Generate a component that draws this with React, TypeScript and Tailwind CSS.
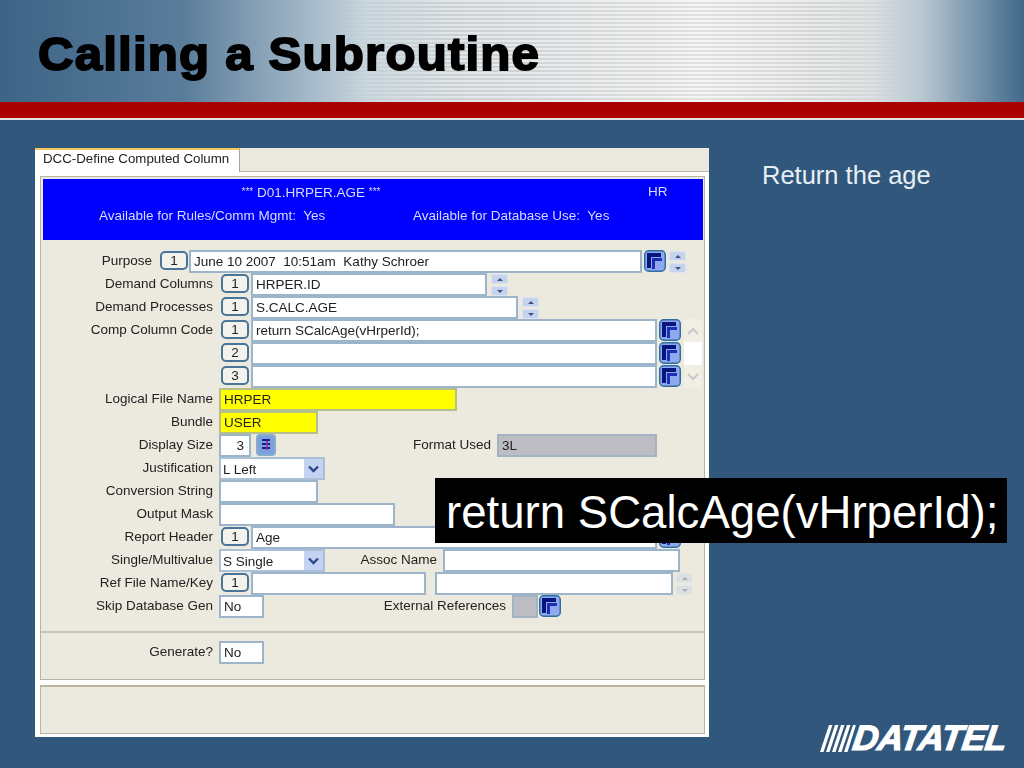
const fontForm = "font-['Liberation_Sans',sans-serif]";

function CopyIcon() {
  return (
    <svg width="22" height="22" viewBox="0 0 22 22" className="shrink-0">
      <rect x="0.75" y="0.75" width="20.500" height="20.500" rx="4" fill="#8fa9ee" stroke="#2f6ea0" strokeWidth="1.5" />
      <path d="M3 3h14v4H7v11H3z" fill="#08157f" />
      <path d="M8 8h10v3h-7v8H8z" fill="#1a2fb5" />
    </svg>
  );
}

function Spinner({ faded = false }: { faded?: boolean }) {
  return (
    <div className={`flex flex-col gap-[2px] shrink-0 w-[17px] pt-[1px] ${faded ? "opacity-40" : ""}`}>
      {[0, 1].map((i) => (
        <div key={i} className="h-[10px] bg-[#c5d4ee] border border-[#dbe3f1] rounded-[2px] flex items-center justify-center">
          <svg width="6" height="3" viewBox="0 0 6 3">
            <path d={i === 0 ? "M3 0L6 3H0z" : "M0 0h6L3 3z"} fill="#44527a" />
          </svg>
        </div>
      ))}
    </div>
  );
}

function NumButton({ n }: { n: number }) {
  return (
    <div className="w-[28px] h-[19px] mt-[1px] shrink-0 bg-[#f3f2ec] border-2 border-[#4a7498] rounded-[5px] flex items-center justify-center text-[13.5px] leading-none text-[#222]">
      {n}
    </div>
  );
}

function Field({ w, value, bg = "bg-white", border = "border-[#9db5ca]", right = false }: { w: string; value?: string; bg?: string; border?: string; right?: boolean }) {
  return (
    <div className={`${w} h-[23px] shrink-0 ${bg} border-2 ${border} px-[3px] text-[13.5px] leading-[19px] text-[#222] whitespace-pre overflow-hidden ${right ? "text-right pr-[5px]" : ""}`}>
      {value}
    </div>
  );
}

function Select({ value }: { value: string }) {
  return (
    <div className="w-[106px] h-[23px] shrink-0 bg-white border-2 border-[#a9c0d6] flex items-center justify-between text-[13.5px] text-[#222] pl-[2px]">
      <span className="leading-none mt-[3px]">{value}</span>
      <div className="w-[19px] h-[19px] bg-[#c5d3f3] flex items-center justify-center">
        <svg width="11" height="8" viewBox="0 0 11 8">
          <path d="M1 1.500l4.500 4.500L10 1.500" fill="none" stroke="#2a4a8a" strokeWidth="2.400" />
        </svg>
      </div>
    </div>
  );
}

function Label({ children }: { children: string }) {
  return <div className="w-[172px] shrink-0 text-right text-[13.5px] text-[#222] leading-[22px] whitespace-nowrap mr-[6px]">{children}</div>;
}

function Row({ label, children }: { label?: string; children?: React.ReactNode }) {
  return (
    <div className="h-[23px] flex items-start">
      <Label>{label ?? ""}</Label>
      {children}
    </div>
  );
}

function InlineLabel({ w, children }: { w: string; children: string }) {
  return <div className={`${w} shrink-0 text-right text-[13.5px] text-[#222] leading-[22px] whitespace-nowrap mr-[6px]`}>{children}</div>;
}

function App() {
  return (
    <div className="relative w-[1024px] h-[768px] overflow-hidden bg-[#31587c] font-['Liberation_Sans',sans-serif]">
      {/* top banner */}
      <div className="relative h-[102px] bg-[linear-gradient(90deg,#3d6486_0%,#5a7d9b_18%,#a3b8c8_30%,#c9d6dd_36%,#d9dfe2_45%,#eeeeee_65%,#f4f4f4_68%,#dcdfe0_85%,#b9c8d2_90%,#6f8ea8_96%,#42688a_100%)]">
        <div className="absolute inset-0 bg-[repeating-linear-gradient(180deg,rgba(255,255,255,0.25)_0px,rgba(255,255,255,0.25)_2px,rgba(150,150,150,0.2)_2px,rgba(150,150,150,0.2)_4px)] [mask-image:linear-gradient(90deg,transparent_33%,black_45%,black_80%,transparent_88%)]" />
        <h1 className="absolute left-[38px] top-[29px] origin-left scale-x-[1.07] text-[46px] leading-[50px] font-bold text-black [-webkit-text-stroke:1.8px_black] whitespace-nowrap tracking-[1.1px]">
          Calling a Subroutine
        </h1>
      </div>
      <div className="h-[16px] bg-[#a90000]" />
      <div className="h-[2px] bg-[#e4e4e4]" />

      {/* content */}
      <div className="flex pl-[35px] pt-[28px]">
        <div className={`w-[674px] h-[589px] bg-[#ece9de] blur-[0.3px] ${fontForm}`}>
          <div className="h-[24px] flex">
            <div className="w-[205px] bg-white border-t-2 border-t-[#f5c860] border-r border-r-[#a8a596] text-[13.3px] leading-[18px] text-[#222] pl-[8px] whitespace-nowrap">
              DCC-Define Computed Column
            </div>
            <div className="flex-1 border-b border-[#b8b5a4]" />
          </div>
          <div className="bg-white pl-[5px] pt-[4px] pb-[3px] h-[565px]">
            <div className="w-[665px] h-[504px] bg-[#ece9de] border border-[#b8b5a4]">
              <div className="ml-[2px] mt-[2px] w-[660px] h-[61px] bg-[#0000ff] text-[#d6dcf5] text-[13.5px] leading-[19px]">
                <div className="flex pt-[3px]">
                  <div className="w-[536px] text-center whitespace-nowrap">
                    <span className="text-[10px] align-[2px]">***</span> D01.HRPER.AGE <span className="text-[10px] align-[2px]">***</span>
                  </div>
                  <div className="ml-[69px]">HR</div>
                </div>
                <div className="flex pt-[4px]">
                  <div className="ml-[56px] w-[314px] whitespace-nowrap">Available for Rules/Comm Mgmt:&nbsp; Yes</div>
                  <div className="whitespace-nowrap">Available for Database Use:&nbsp; Yes</div>
                </div>
              </div>

              <div className="pt-[10px]">
                <Row>
                  <div className="-ml-[178px] flex items-start">
                    <div className="w-[111px] text-right text-[13.5px] text-[#222] leading-[22px] mr-[8px]">Purpose</div>
                    <NumButton n={1} />
                    <div className="w-[1px]" />
                    <Field w="w-[453px]" value="June 10 2007  10:51am  Kathy Schroer" />
                    <div className="w-[2px]" />
                    <CopyIcon />
                    <div className="w-[3px]" />
                    <Spinner />
                  </div>
                </Row>
                <Row label="Demand Columns">
                  <div className="w-[2px]" />
                  <NumButton n={1} />
                  <div className="w-[2px]" />
                  <Field w="w-[236px]" value="HRPER.ID" />
                  <div className="w-[4px]" />
                  <Spinner />
                </Row>
                <Row label="Demand Processes">
                  <div className="w-[2px]" />
                  <NumButton n={1} />
                  <div className="w-[2px]" />
                  <Field w="w-[267px]" value="S.CALC.AGE" />
                  <div className="w-[4px]" />
                  <Spinner />
                </Row>
                <Row label="Comp Column Code">
                  <div className="w-[2px]" />
                  <NumButton n={1} />
                  <div className="w-[2px]" />
                  <Field w="w-[406px]" value="return SCalcAge(vHrperId);" />
                  <div className="w-[2px]" />
                  <CopyIcon />
                  <div className="w-[3px]" />
                  <div className="w-[18px] h-[23px] bg-[#f1efe4] flex items-center justify-center">
                    <svg width="12" height="8" viewBox="0 0 12 8"><path d="M1 7l5-5 5 5" fill="none" stroke="#c6c8cc" strokeWidth="2" /></svg>
                  </div>
                </Row>
                <Row>
                  <div className="w-[2px]" />
                  <NumButton n={2} />
                  <div className="w-[2px]" />
                  <Field w="w-[406px]" />
                  <div className="w-[2px]" />
                  <CopyIcon />
                  <div className="w-[3px]" />
                  <div className="w-[18px] h-[23px] bg-white" />
                </Row>
                <Row>
                  <div className="w-[2px]" />
                  <NumButton n={3} />
                  <div className="w-[2px]" />
                  <Field w="w-[406px]" />
                  <div className="w-[2px]" />
                  <CopyIcon />
                  <div className="w-[3px]" />
                  <div className="w-[18px] h-[23px] bg-[#f1efe4] flex items-center justify-center">
                    <svg width="12" height="8" viewBox="0 0 12 8"><path d="M1 1l5 5 5-5" fill="none" stroke="#c6c8cc" strokeWidth="2" /></svg>
                  </div>
                </Row>
                <Row label="Logical File Name">
                  <Field w="w-[238px]" value="HRPER" bg="bg-[#ffff00]" border="border-[#b5bf8a]" />
                </Row>
                <Row label="Bundle">
                  <Field w="w-[99px]" value="USER" bg="bg-[#ffff00]" border="border-[#b5bf8a]" />
                </Row>
                <Row label="Display Size">
                  <Field w="w-[32px]" value="3" right />
                  <div className="w-[5px]" />
                  <div className="w-[20px] h-[22px] shrink-0 bg-[#7d9fe0] border-2 border-[#86aecb] rounded-[4px] flex items-center justify-center">
                    <svg width="10" height="14" viewBox="0 0 10 14">
                      <path d="M1 1h8v2H1zM1 5h8v2H1zM1 9h8v2H1z" fill="#14208c" />
                      <path d="M6 3v9" stroke="#a02a8a" strokeWidth="1.5" />
                    </svg>
                  </div>
                  <InlineLabel w="w-[215px]">Format Used</InlineLabel>
                  <Field w="w-[160px]" value="3L" bg="bg-[#bdbcc2]" border="border-[#a3b3c4]" />
                </Row>
                <Row label="Justification">
                  <Select value="L Left" />
                </Row>
                <Row label="Conversion String">
                  <Field w="w-[99px]" />
                </Row>
                <Row label="Output Mask">
                  <Field w="w-[176px]" />
                </Row>
                <Row label="Report Header">
                  <div className="w-[2px]" />
                  <NumButton n={1} />
                  <div className="w-[2px]" />
                  <Field w="w-[406px]" value="Age" />
                  <div className="w-[2px]" />
                  <CopyIcon />
                </Row>
                <Row label="Single/Multivalue">
                  <Select value="S Single" />
                  <InlineLabel w="w-[112px]">Assoc Name</InlineLabel>
                  <Field w="w-[237px]" />
                </Row>
                <Row label="Ref File Name/Key">
                  <div className="w-[2px]" />
                  <NumButton n={1} />
                  <div className="w-[2px]" />
                  <Field w="w-[175px]" />
                  <div className="w-[9px]" />
                  <Field w="w-[238px]" />
                  <div className="w-[3px]" />
                  <Spinner faded />
                </Row>
                <Row label="Skip Database Gen">
                  <Field w="w-[45px]" value="No" />
                  <InlineLabel w="w-[242px]">External References</InlineLabel>
                  <div className="w-[26px] h-[23px] shrink-0 bg-[#bdbcc2] border-2 border-[#a3b3c4]" />
                  <div className="w-[1px]" />
                  <CopyIcon />
                </Row>
              </div>

              <div className="mt-[13px] border-t-2 border-[#c9c6b6] pt-[8px]">
                <Row label="Generate?">
                  <Field w="w-[45px]" value="No" />
                </Row>
              </div>
            </div>
            <div className="mt-[5px] w-[665px] h-[49px] bg-[#ece9de] border border-[#b8b5a4] border-t-2" />
          </div>
        </div>
        <div className="ml-[53px] mt-[12px] text-[25.5px] leading-[30px] text-[#e8eef3]">Return the age</div>
      </div>

      {/* callout over the form */}
      <div className="absolute left-[435px] top-[478px] w-[572px] h-[65px] bg-black text-white text-[45.6px] leading-[70px] pl-[11px] whitespace-nowrap">
        return SCalcAge(vHrperId);
      </div>

      {/* logo */}
      <div className="absolute left-[820px] top-[725px] flex items-center">
        <svg width="36" height="27" viewBox="0 0 36 27" className="shrink-0">
          <path d="M9 0h3.500L3.500 27H0zM15 0h3.500L9.500 27H6zM21 0h3.500L15.500 27H12zM27 0h3.500L21.500 27H18zM33 0h3L27.500 27H24z" fill="#fff" />
        </svg>
        <span className="-ml-[3px] -skew-x-[8deg] text-[35.5px] leading-[27px] font-bold italic text-white [-webkit-text-stroke:1.2px_white] whitespace-nowrap tracking-[-0.6px]">DATATEL</span>
      </div>
    </div>
  );
}

export default App;
